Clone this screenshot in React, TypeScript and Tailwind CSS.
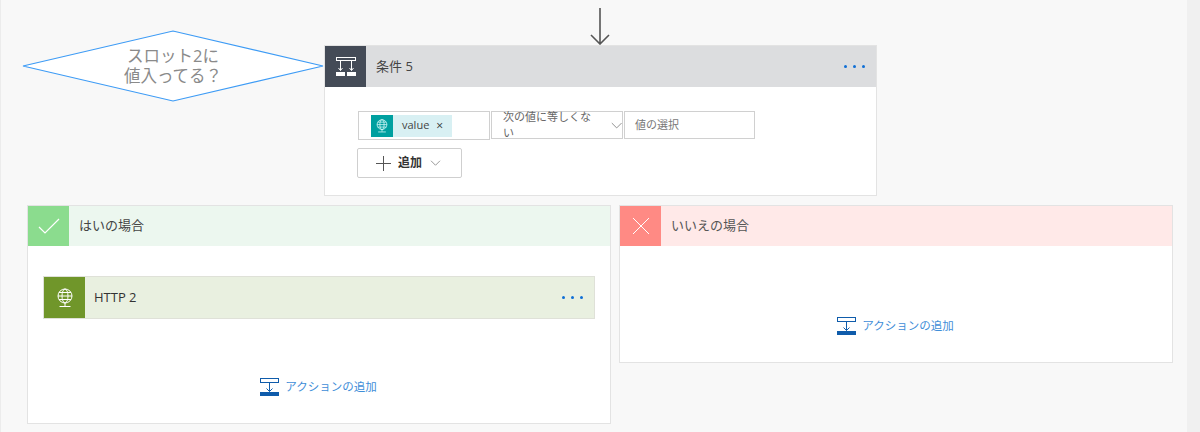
import React from "react";

const FONT = "font-['Open_Sans','Noto_Sans_CJK_JP',sans-serif]";

function Dots() {
  return (
    <div className="ml-auto mr-[11px] flex gap-[6px]">
      <span className="h-[3px] w-[3px] rounded-full bg-[#0f6fd6]" />
      <span className="h-[3px] w-[3px] rounded-full bg-[#0f6fd6]" />
      <span className="h-[3px] w-[3px] rounded-full bg-[#0f6fd6]" />
    </div>
  );
}

function Chevron({ className }: { className: string }) {
  return (
    <svg viewBox="0 0 14 8" className={className} fill="none" stroke="#777" strokeWidth="1">
      <path d="M1 1l6 6 6-6" />
    </svg>
  );
}

function Globe({ size, stroke }: { size: number; stroke: string }) {
  return (
    <svg width={size} height={size} viewBox="0 0 20 20" fill="none" stroke={stroke} strokeWidth="1">
      <circle cx="10" cy="8" r="7" />
      <ellipse cx="10" cy="8" rx="3" ry="7" />
      <path d="M3 8h14M4 4.5h12M4 11.5h12M10 15v3M4.5 18.5h11" />
    </svg>
  );
}

function AddAction() {
  return (
    <div className="flex items-center">
      <svg width="20" height="20" viewBox="0 0 20 20" fill="none" className="mr-[5px]">
        <rect x="0.5" y="1.5" width="18" height="4" stroke="#0f5cab" />
        <path d="M9.5 5.5v9M6.5 11.5l3 3 3-3" stroke="#0f5cab" />
        <rect x="0" y="15" width="19" height="4" fill="#0f5cab" />
      </svg>
      <span className="text-[11.5px] text-[#3f8ed8]">アクションの追加</span>
    </div>
  );
}

export default function App() {
  return (
    <div className={`${FONT} relative flex h-[432px] w-[1200px] flex-col overflow-hidden border-l border-[#ececec] bg-[#f8f8f8] text-[#444]`}>
      <div className="absolute bottom-0 right-0 top-0 w-[13px] bg-[#f0f0f0]" />

      {/* arrow */}
      <div className="flex h-[45px] shrink-0 justify-center pr-[1px] pt-[8px]">
        <svg width="20" height="37" viewBox="0 0 20 37" fill="none" stroke="#555" strokeWidth="1.6">
          <path d="M10 0v36M1 27l9 9 9-9" />
        </svg>
      </div>

      {/* condition */}
      <div className="ml-[323px] flex h-[151px] w-[553px] shrink-0 flex-col border border-[#e3e3e3] bg-white">
        <div className="flex h-[41px] shrink-0 items-center bg-[#dcdddf]">
          <div className="flex h-[41px] w-[41px] items-center justify-center bg-[#444b57]">
            <svg width="22" height="22" viewBox="0 0 22 22" fill="none" stroke="#fff" strokeWidth="1">
              <rect x="1.5" y="1.5" width="19" height="3" />
              <path d="M5.5 4.5v10M16.500 4.500v10M3.500 12l2 2.500 2-2.500M14.500 12l2 2.500 2-2.500" />
              <rect x="1" y="16" width="9" height="4" fill="#fff" stroke="none" />
              <rect x="12" y="16" width="9" height="4" fill="#fff" stroke="none" />
            </svg>
          </div>
          <span className="ml-[10px] text-[13px] text-[#444]">条件 5</span>
          <Dots />
        </div>

        <div className="flex pl-[33px] pt-[24px]">
          <div className="flex h-[29px] w-[132px] items-center border border-[#d0d0d0] pl-[12px]">
            <div className="flex h-[22px] w-[81px] items-center bg-[#d8f0f3]">
              <div className="flex h-[22px] w-[22px] items-center justify-center bg-[#00a0a0]">
                <Globe size={14} stroke="#e6ffff" />
              </div>
              <span className="ml-[9px] text-[11px] text-[#444]">value</span>
              <span className="ml-[7px] text-[12px] leading-none text-[#333]">×</span>
            </div>
          </div>
          <div className="ml-[1px] flex h-[28px] w-[132px] items-center border border-[#d0d0d0] pl-[11px]">
            <span className="text-[11px] text-[#666]">次の値に等しくない</span>
            <Chevron className="ml-[14px] h-[7px] w-[12px]" />
          </div>
          <div className="ml-[1px] flex h-[28px] w-[131px] items-center border border-[#d0d0d0] pl-[10px]">
            <span className="text-[11px] text-[#777]">値の選択</span>
          </div>
        </div>

        <div className="ml-[32px] mt-[8px] flex h-[30px] w-[105px] items-center rounded-[2px] border border-[#cfcfcf] pl-[18px]">
          <svg width="15" height="15" viewBox="0 0 15 15" stroke="#555" strokeWidth="1">
            <path d="M7.500 0v15M0 7.500h15" />
          </svg>
          <span className="ml-[7px] text-[12px] font-bold text-[#333]">追加</span>
          <Chevron className="ml-[8px] h-[6px] w-[11px]" />
        </div>
      </div>

      {/* branches */}
      <div className="ml-[26px] mt-[9px] flex items-start gap-[8px]">
        <div className="flex h-[219px] w-[584px] shrink-0 flex-col border border-[#e3e3e3] bg-white">
          <div className="flex h-[40px] shrink-0 items-center bg-[#ecf7ef]">
            <div className="flex h-[40px] w-[41px] items-center justify-center bg-[#8bdc8e]">
              <svg width="22" height="16" viewBox="0 0 22 16" fill="none" stroke="#fff" strokeWidth="1.2">
                <path d="M1 9l6 6L21 1" />
              </svg>
            </div>
            <span className="ml-[10px] text-[13px] text-[#444]">はいの場合</span>
          </div>
          <div className="mx-[15px] mt-[30px] flex h-[43px] items-center border border-[#dfe1d8] bg-[#e9f0e0]">
            <div className="flex h-[41px] w-[41px] items-center justify-center bg-[#70962a]">
              <Globe size={20} stroke="#fff" />
            </div>
            <span className="ml-[9px] text-[13px] text-[#333]">HTTP 2</span>
            <Dots />
          </div>
          <div className="mt-[58px] flex justify-center pr-[1px]">
            <AddAction />
          </div>
        </div>

        <div className="flex h-[158px] w-[554px] shrink-0 flex-col border border-[#e3e3e3] bg-white">
          <div className="flex h-[40px] shrink-0 items-center bg-[#ffe9e8]">
            <div className="flex h-[40px] w-[41px] items-center justify-center bg-[#ff8a84]">
              <svg width="18" height="18" viewBox="0 0 18 18" stroke="#fff" strokeWidth="1">
                <path d="M1 1l16 16M17 1L1 17" />
              </svg>
            </div>
            <span className="ml-[10px] text-[13px] text-[#555]">いいえの場合</span>
          </div>
          <div className="mt-[70px] flex justify-center pr-[1px]">
            <AddAction />
          </div>
        </div>
      </div>

      {/* decision callout over the canvas */}
      <div className="absolute left-[21px] top-[30px] flex h-[72px] w-[302px] items-center justify-center">
        <svg width="302" height="72" viewBox="0 0 302 72" className="absolute inset-0" fill="#fff" stroke="#3d9bf5" strokeWidth="1.2">
          <path d="M1 36L151 1l150 35-150 35z" />
        </svg>
        <div className="relative text-center text-[16.500px] leading-[20px] text-[#8a8a8a]">
          スロット2に
          <br />
          値入ってる？
        </div>
      </div>
    </div>
  );
}
